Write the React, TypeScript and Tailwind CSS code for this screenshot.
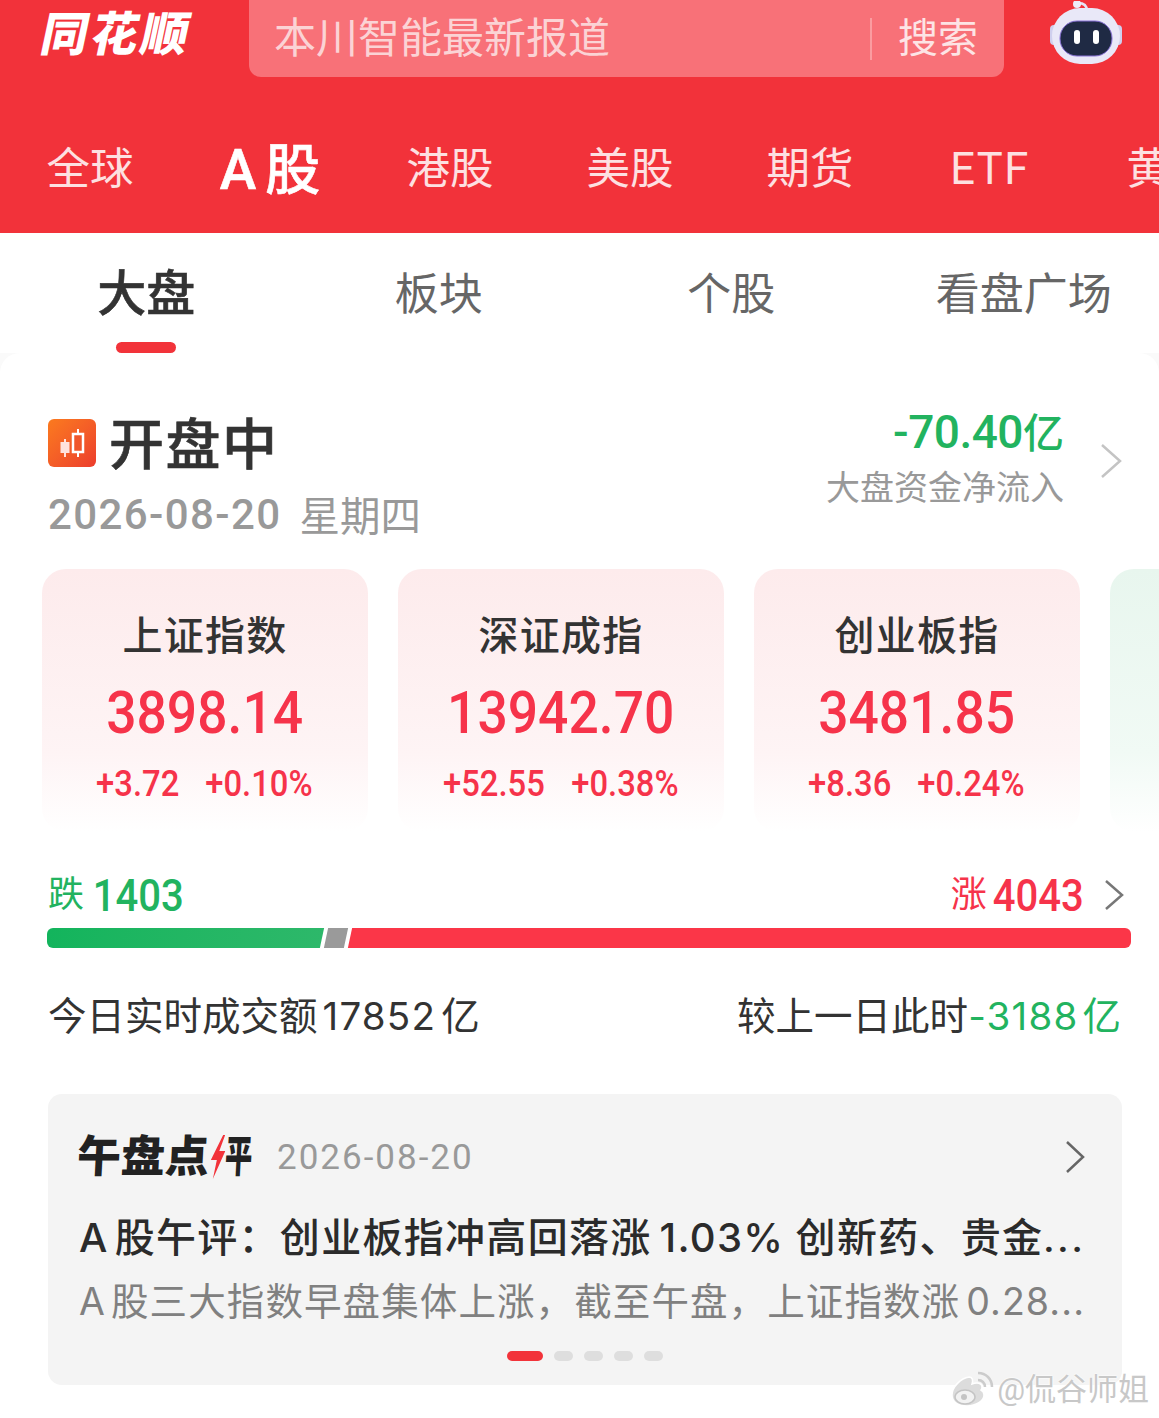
const cjk = "font-['Roboto','Noto_Sans_CJK_SC',sans-serif]";

const markets = ["全球", "A股", "港股", "美股", "期货", "ETF", "黄金"];
const subTabs = ["大盘", "板块", "个股", "看盘广场"];

const indexes = [
  { name: "上证指数", value: "3898.14", diff: "+3.72", pct: "+0.10%" },
  { name: "深证成指", value: "13942.70", diff: "+52.55", pct: "+0.38%" },
  { name: "创业板指", value: "3481.85", diff: "+8.36", pct: "+0.24%" },
];

const Latin = ({ children, className = "" }: { children: string; className?: string }) => (
  <span className={`font-['Inter',sans-serif] ${className}`}>{children}</span>
);

const Chevron = ({ w, h, color }: { w: number; h: number; color: string }) => (
  <svg width={w} height={h} viewBox={`0 0 ${w} ${h}`} fill="none" className="shrink-0">
    <path d={`M2 2L${w - 2} ${h / 2}L2 ${h - 2}`} stroke={color} strokeWidth="2.500" />
  </svg>
);

const RobotIcon = () => (
  <svg width="74" height="68" viewBox="0 0 74 68">
    <path d="M29 2C34 2 38 4 38 10" fill="none" stroke="#e6e4f5" strokeWidth="2.500" />
    <circle cx="28" cy="3" r="4" fill="#eeedf9" />
    <rect x="1" y="24" width="8" height="20" rx="4" fill="#cfcfee" />
    <rect x="65" y="24" width="8" height="20" rx="4" fill="#cfcfee" />
    <rect x="3" y="7" width="68" height="56" rx="28" fill="#e9e8f8" />
    <rect x="11" y="20" width="52" height="35" rx="17" fill="#1f2a44" stroke="#8a73d8" strokeWidth="1" />
    <rect x="25" y="29" width="6" height="14" rx="3" fill="#ffffff" />
    <rect x="44" y="29" width="6" height="14" rx="3" fill="#ffffff" />
  </svg>
);

const CandleIcon = () => (
  <div className="w-12 h-12 -mt-[4px] rounded-md bg-gradient-to-br from-[#fb7a1e] to-[#ec3c2c] flex items-center justify-center">
    <svg width="28" height="32" viewBox="0 0 28 32">
      <path d="M7 12v18" stroke="#ffe2dc" strokeWidth="2" />
      <rect x="2.500" y="15" width="9" height="11" fill="#ffe2dc" />
      <path d="M20 2v28" stroke="#fff" strokeWidth="2" />
      <rect x="15" y="7" width="10" height="18" fill="#f0562a" stroke="#fff" strokeWidth="2.500" />
    </svg>
  </div>
);

const BoltIcon = () => (
  <svg width="14" height="44" viewBox="0 0 14 44" className="shrink-0">
    <path d="M11 0L0 25h6L3 44l11-28H8L13 0z" fill="#f2333a" />
  </svg>
);

const WeiboIcon = () => (
  <svg width="46" height="36" viewBox="0 0 46 36" fill="none">
    <path
      d="M3 24C3 16 12 7 20 6c4 0 4 4 3 7 5-2 10-1 10 3 0 1 0 2-1 3 2 1 3 2 3 5 0 6-8 11-17 11S3 31 3 24z"
      fill="#dcdcdc"
      stroke="#ffffff"
      strokeWidth="1.500"
    />
    <ellipse cx="16" cy="26" rx="10" ry="7" fill="#f2f2f2" stroke="#c4c4c4" strokeWidth="1.500" />
    <circle cx="15" cy="26" r="3" fill="#c4c4c4" />
    <path d="M29 2c8 0 14 6 14 14" stroke="#cccccc" strokeWidth="2.500" />
    <path d="M29 9c4 0 7 3 7 7" stroke="#cccccc" strokeWidth="2.500" />
  </svg>
);

export default function App() {
  return (
    <div className={`w-[1159px] h-[1418px] overflow-hidden bg-[#fafafa] relative ${cjk}`}>
      <div className="bg-[#f2323a] h-[233px]">
        <div className="flex h-[77px]">
          <div className="w-[249px] pl-[34px] pt-[5px]">
            <span className="block -skew-x-12 origin-left text-white font-black text-[47px] leading-[60px] tracking-[3px] ml-[8px] whitespace-nowrap">
              同花顺
            </span>
          </div>
          <div className="w-[755px] rounded-b-xl bg-[#f87178] flex items-center pl-[25px]">
            <span className="text-[#fbd3d5] text-[42px] leading-none w-[596px]">本川智能最新报道</span>
            <span className="w-[2px] h-[42px] bg-[#fb9ca0]" />
            <span className="text-[#fde4e5] text-[40px] leading-none ml-[26px]">搜索</span>
          </div>
          <div className="ml-[45px] pt-[1px]">
            <RobotIcon />
          </div>
        </div>
        <div className="flex items-center h-[156px] pt-[30px]">
          {markets.map((m) => (
            <div key={m} className="w-[180px] shrink-0 flex justify-center">
              {m === "A股" ? (
                <span className="text-white font-medium [-webkit-text-stroke:0.6px_#fff] text-[55px] leading-none whitespace-nowrap">
                  <span className="mr-[9px]">A</span>股
                </span>
              ) : (
                <span className={`text-[#fde0e1] text-[43.500px] leading-none whitespace-nowrap ${m === "ETF" ? "tracking-[1.500px]" : ""}`}>
                  {m}
                </span>
              )}
            </div>
          ))}
        </div>
      </div>

      <div className="flex h-[120px] bg-white">
        {subTabs.map((t, i) => (
          <div key={t} className="w-[292.500px] shrink-0 relative flex justify-center pt-[36px]">
            <span
              className={
                i === 0
                  ? "text-[#333] font-medium [-webkit-text-stroke:0.6px_#333] text-[49px] leading-[52px]"
                  : "text-[#666] text-[44px] leading-[52px]"
              }
            >
              {t}
            </span>
            {i === 0 && <span className="absolute bottom-0 w-[60px] h-[11px] rounded-full bg-[#f2333a]" />}
          </div>
        ))}
      </div>

      <div className="bg-white rounded-t-[20px] h-[1065px]">
        <div className="pl-[48px] pr-[37px] flex justify-between pt-[57px]">
          <div>
            <div className="flex items-center gap-[13px] h-[70px]">
              <CandleIcon />
              <span className="text-[#333] font-medium [-webkit-text-stroke:0.6px_#333] text-[55px] leading-none tracking-[1.500px]">
                开盘中
              </span>
            </div>
            <div className="flex items-center mt-[10px] h-[50px]">
              <span className="text-[#999] text-[42px] leading-none font-medium tracking-[1.400px]">2026-08-20</span>
              <span className="text-[#999] text-[40.500px] leading-none ml-[18px] mt-[4px]">星期四</span>
            </div>
          </div>
          <div className="flex items-start">
            <div className="flex flex-col items-end -mt-[3px]">
              <span className="text-[#22b35f] leading-[50px] font-medium whitespace-nowrap">
                <span className="text-[46px] tracking-[-0.500px]">-70.40</span>
                <span className="text-[41px]">亿</span>
              </span>
              <span className="text-[#999] text-[34px] leading-[44px] -mt-[2px]">大盘资金净流入</span>
            </div>
            <div className="ml-[36px] mt-[33px]">
              <Chevron w={22} h={36} color="#c4c4c4" />
            </div>
          </div>
        </div>

        <div className="flex gap-[30px] pl-[42px] mt-[29px]">
          {indexes.map((x) => (
            <div
              key={x.name}
              className="w-[326px] h-[263px] shrink-0 rounded-[24px] bg-gradient-to-b from-[#fdebec] via-[#fef4f5] via-70% to-white flex flex-col items-center pt-[40px]"
            >
              <span className="text-[#333] font-medium text-[40px] tracking-[1.300px] leading-[56px]">{x.name}</span>
              <span className="inline-block scale-x-[0.89] text-[#f6334a] font-medium text-[60px] leading-[60px] mt-[18px]">
                {x.value}
              </span>
              <div className="flex gap-[17px] mt-[21px] text-[#f6334a] font-medium text-[36px] leading-[40px]">
                <span className="inline-block scale-x-[0.91]">{x.diff}</span>
                <span className="inline-block scale-x-[0.91]">{x.pct}</span>
              </div>
            </div>
          ))}
          <div className="w-[326px] h-[263px] shrink-0 rounded-[24px] bg-gradient-to-b from-[#e8f6ee] via-[#f1faf5] via-70% to-white" />
        </div>

        <div className="pl-[48px] pr-[35px] flex justify-between items-center mt-[37px] h-[52px]">
          <div className="flex items-center gap-[3px] text-[#22b35f]">
            <span className="text-[36px] leading-none">跌</span>
            <span className="inline-block scale-x-[0.89] text-[45px] leading-none font-medium">1403</span>
          </div>
          <div className="flex items-center text-[#f6334a]">
            <span className="text-[36px] leading-none">涨</span>
            <span className="inline-block scale-x-[0.89] text-[45px] leading-none font-medium">4043</span>
            <div className="ml-[15px]">
              <Chevron w={20} h={32} color="#777777" />
            </div>
          </div>
        </div>

        <div className="ml-[47px] w-[1084px] flex h-[20px] mt-[7px] gap-[4px] overflow-hidden rounded-md">
          <div className="w-[279px] -skew-x-12 -ml-[4px] bg-gradient-to-r from-[#12b45c] to-[#2db86a]" />
          <div className="w-[20px] -skew-x-12 bg-[#9a9a9a]" />
          <div className="flex-1 -skew-x-12 -mr-[4px] bg-[#fb3648]" />
        </div>

        <div className="pl-[48px] pr-[38px] flex justify-between items-center mt-[45px] h-[48px] text-[38.500px] leading-none text-[#333]">
          <span className="whitespace-nowrap">
            今日实时成交额<Latin className="mx-[5px] tracking-[1.200px]">17852</Latin>亿
          </span>
          <span className="whitespace-nowrap">
            较上一日此时
            <span className="text-[#22b35f]">
              <Latin className="mr-[4px] tracking-[1.200px]">-3188</Latin>亿
            </span>
          </span>
        </div>

        <div className="mx-[48px] mt-[53px] w-[1074px] h-[291px] rounded-[14px] bg-[#f4f4f4] px-[31px] pt-[34px]">
          <div className="flex items-center h-[58px]">
            <div className="flex items-center -skew-x-3 -ml-[2px] text-[#222] font-black text-[44px] leading-none w-[175px] whitespace-nowrap">
              <span>午盘点</span>
              <span className="ml-[2px]">
                <BoltIcon />
              </span>
              <span className="inline-block w-[28px] scale-x-[0.62] origin-left">平</span>
            </div>
            <span className="ml-[25px] text-[#999] text-[35px] leading-none tracking-[2px] whitespace-nowrap">2026-08-20</span>
            <div className="ml-auto mr-[6px]">
              <Chevron w={20} h={34} color="#666666" />
            </div>
          </div>
          <div className="whitespace-nowrap text-[#2b2b2b] text-[40px] tracking-[1.300px] leading-[56px] font-medium mt-[24px]">
            <Latin className="mr-[6px]">A</Latin>股午评：创业板指冲高回落涨<Latin className="ml-[8px]">1.03%</Latin> 创新药、贵金<span className="tracking-[3px]">...</span>
          </div>
          <div className="whitespace-nowrap text-[#808080] text-[37.500px] tracking-[1.100px] leading-[52px] mt-[9px]">
            <Latin className="mr-[5px]">A</Latin>股三大指数早盘集体上涨，截至午盘，上证指数涨<Latin className="ml-[6px]">0.28...</Latin>
          </div>
          <div className="flex justify-center gap-[11px] mt-[23px]">
            <span className="w-[36px] h-[10px] rounded-full bg-[#f2333a]" />
            <span className="w-[19px] h-[10px] rounded-full bg-[#dedede]" />
            <span className="w-[19px] h-[10px] rounded-full bg-[#dedede]" />
            <span className="w-[19px] h-[10px] rounded-full bg-[#dedede]" />
            <span className="w-[19px] h-[10px] rounded-full bg-[#dedede]" />
          </div>
        </div>
      </div>

      <div className="absolute right-[10px] bottom-[11px] flex items-center">
        <WeiboIcon />
        <span className="text-[#c8c8c8] text-[31px] leading-none ml-[2px] [text-shadow:0_0_2px_#fff,0_0_2px_#fff]">@侃谷师姐</span>
      </div>
    </div>
  );
}
